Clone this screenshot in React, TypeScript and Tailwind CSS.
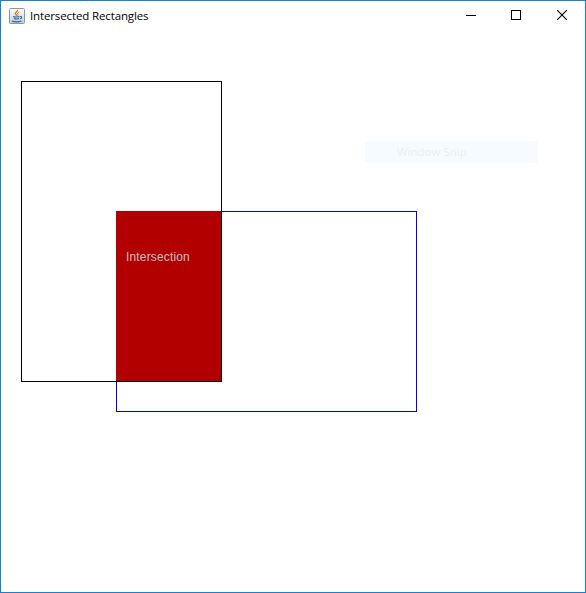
import React from "react";

function JavaIcon() {
  return (
    <svg width="16" height="16" viewBox="0 0 16 16" fill="none">
      <defs>
        <linearGradient id="tile" x1="0" y1="0" x2="0" y2="1">
          <stop offset="0" stopColor="#ffffff" />
          <stop offset="1" stopColor="#bccbd9" />
        </linearGradient>
      </defs>
      <rect x="0.5" y="0.5" width="15" height="15" rx="1" fill="url(#tile)" stroke="#8598aa" />
      <path d="M8.6 1.8C9.2 3.4 6 4.3 6.2 5.6C6.4 6.5 7.7 6.8 7.6 7.9" stroke="#e2702a" strokeWidth="1.3" />
      <path d="M10.4 4C8.5 4.8 8 5.4 8.8 6.4C9.2 7 8.8 7.4 8.4 7.8" stroke="#e2702a" />
      <path d="M4 8.6C5.5 9.3 9.3 9.2 10.5 8.5M5 10.5C6.5 11.1 8.7 11.1 10 10.5M11 8.5C13.5 8.2 13 10.2 11 10.8M3 13C5 14.1 10 14.1 12.5 13" stroke="#3a6a96" strokeWidth="1.1" />
    </svg>
  );
}

function TitleBar() {
  return (
    <header className="flex h-[29px] items-center pl-2">
      <JavaIcon />
      <h1 className="ml-[5px] flex-1 whitespace-nowrap pt-px text-[11.5px] leading-4 tracking-[-0.13px] text-black">
        Intersected Rectangles
      </h1>
      <div className="flex h-7 self-start">
        <button aria-label="Minimize" className="flex w-[45px] items-center justify-center">
          <svg width="10" height="10" shapeRendering="crispEdges"><path d="M0 5h10v1H0z" /></svg>
        </button>
        <button aria-label="Maximize" className="flex w-[46px] items-center justify-center">
          <svg width="10" height="10" shapeRendering="crispEdges"><path d="M.5 .5h9v9h-9z" fill="none" stroke="#000" /></svg>
        </button>
        <button aria-label="Close" className="flex w-[46px] items-center justify-center">
          <svg width="10" height="10"><path d="M0 0l10 10M10 0L0 10" fill="none" stroke="#000" strokeWidth="1.1" /></svg>
        </button>
      </div>
    </header>
  );
}

export default function App() {
  return (
    <main className="flex h-[593px] w-[586px] flex-col overflow-hidden border border-[#1b7fd0] bg-white font-['Open_Sans','Noto_Sans',sans-serif]">
      <TitleBar />
      <section className="relative flex-1">
        <div className="absolute left-[115px] top-[181px] h-[201px] w-[301px] border border-[#0000ff]" />
        <div className="absolute left-[115px] top-[181px] h-[170px] w-[105px] bg-[#b20000]" />
        <div className="absolute left-5 top-[51px] h-[301px] w-[201px] border border-black" />
        <span className="absolute left-[125px] top-[219px] whitespace-nowrap font-['Liberation_Sans',Arial,sans-serif] text-[12px] leading-4 tracking-[0.16px] text-[#c0c0c0]">
          Intersection
        </span>
        <div className="absolute left-[364px] top-[111px] flex h-[22px] w-[173px] items-center bg-[#f6fbff] pl-8 text-[11.5px] leading-4 text-[#ededee]">
          Window Snip
        </div>
      </section>
    </main>
  );
}
